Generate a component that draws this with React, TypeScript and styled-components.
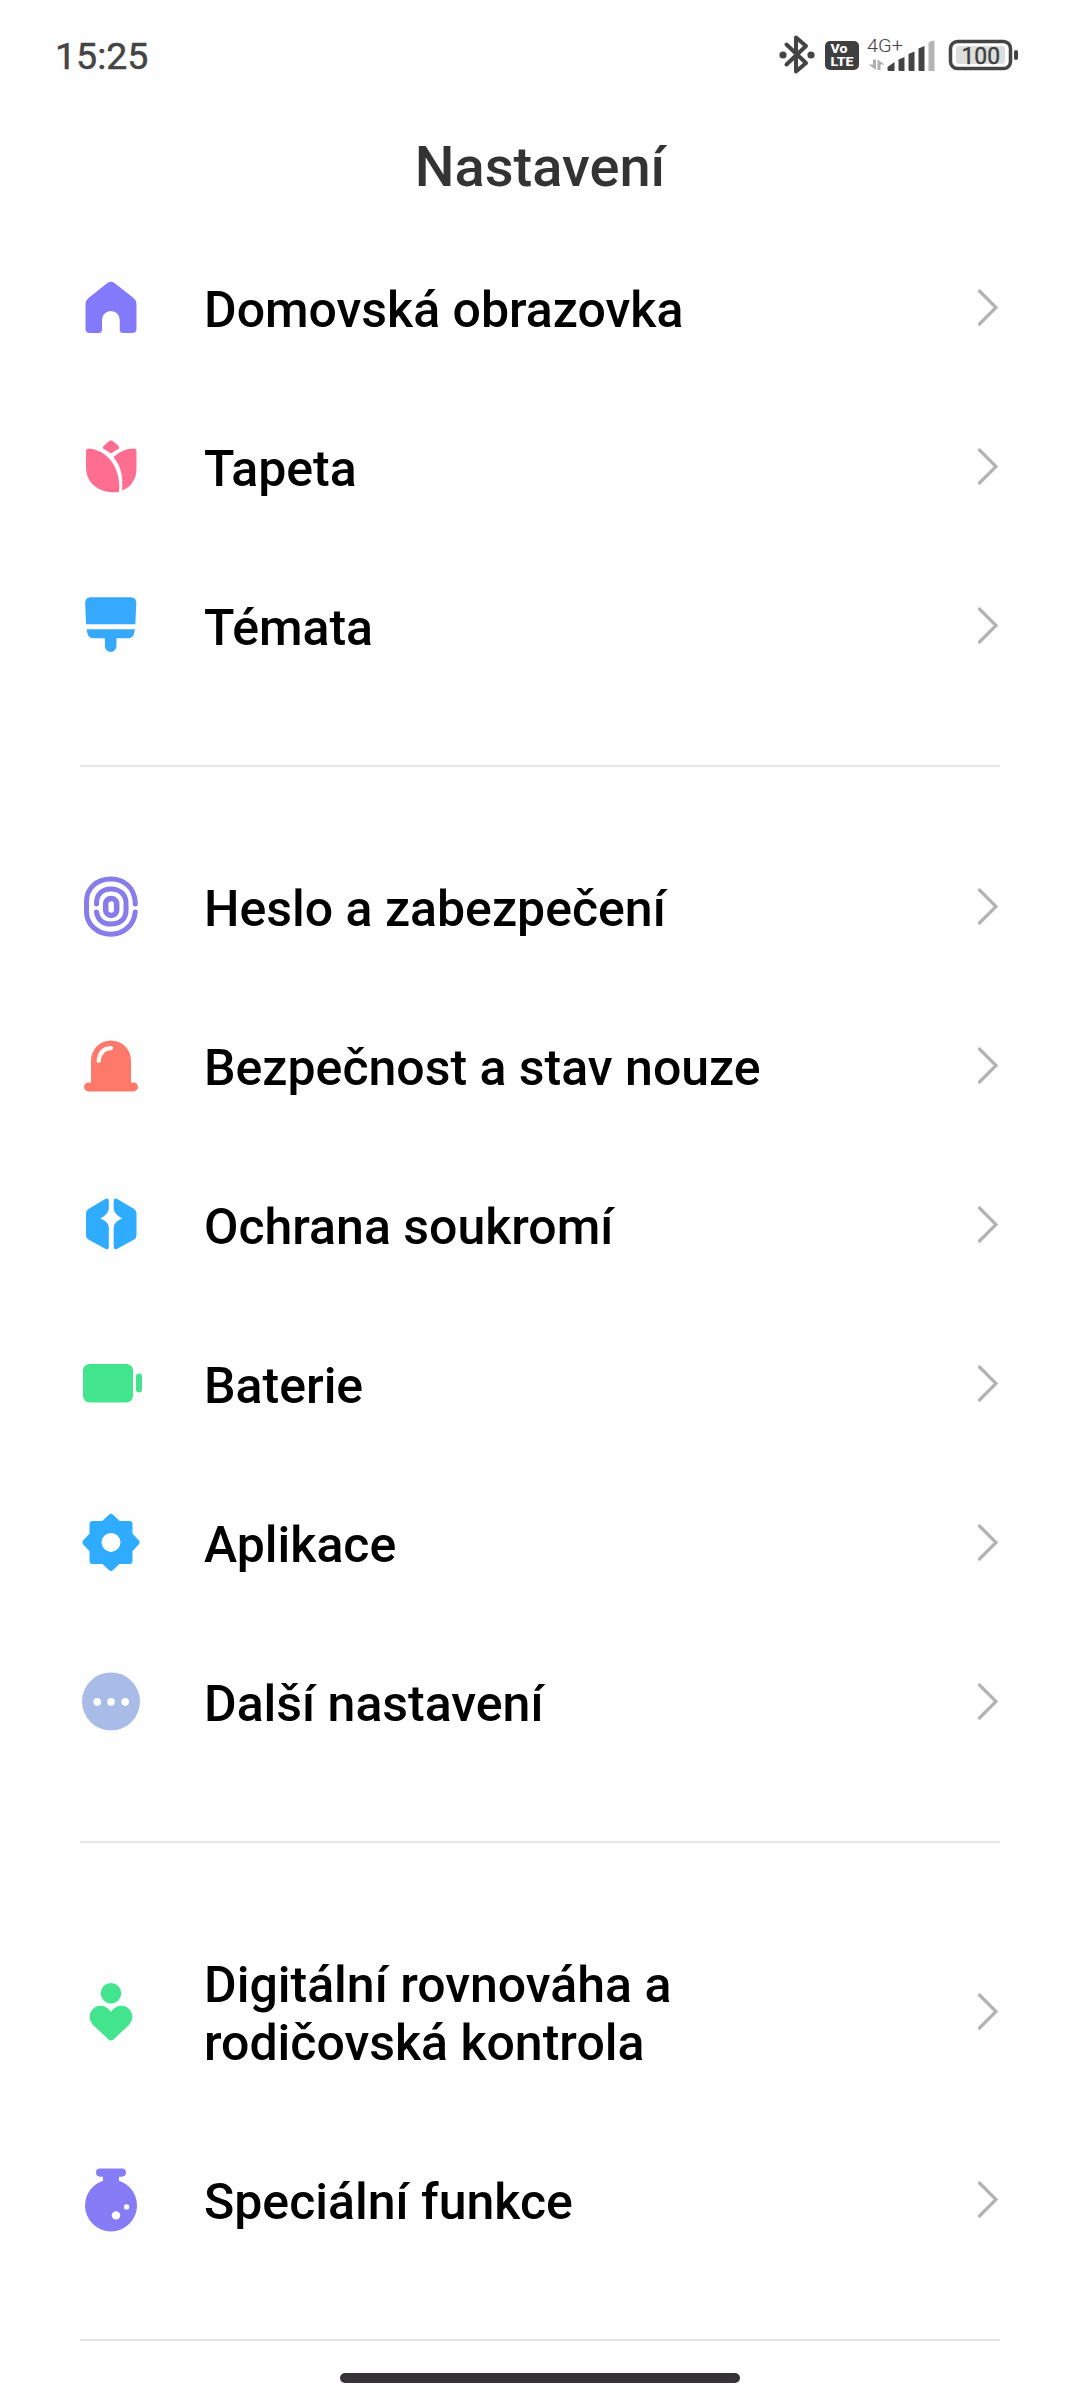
import React from "react";
import styled, { createGlobalStyle } from "styled-components";

const GlobalStyle = createGlobalStyle`
  * { box-sizing: border-box; }
  html, body { margin: 0; background: #fefefe; }
`;

const Screen = styled.div`
  width: 1080px;
  height: 2400px;
  overflow: hidden;
  display: flex;
  flex-direction: column;
  background: #fefefe;
  color: #000;
  font-family: Roboto, "Noto Sans", sans-serif;
`;

const StatusBar = styled.header`
  height: 112px;
  flex: none;
  display: flex;
  justify-content: space-between;
  padding: 0 60px 0 55px;
  color: #444;
`;

const Clock = styled.span`
  font-size: 37.5px;
  line-height: 44px;
  padding-top: 34px;
  -webkit-text-stroke: 0.5px #444;
`;

const StatusIcons = styled.svg`
  width: 280px;
  height: 70px;
  margin: 20px -20px 0 0;
  font-family: Roboto, sans-serif;
`;

const Title = styled.h1`
  height: 116px;
  flex: none;
  margin: 0;
  padding-top: 22px;
  text-align: center;
  font-size: 56px;
  line-height: 66px;
  font-weight: 500;
  color: #333;
`;

const List = styled.ul`
  list-style: none;
  margin: 0;
  padding: 0 80px;
`;

const Row = styled.li<{ $tall?: boolean }>`
  height: ${(p) => (p.$tall ? 217 : 159)}px;
  display: flex;
  align-items: center;
`;

const IconBox = styled.svg`
  width: 64px;
  height: 64px;
  flex: none;
  margin-right: 60px;
`;

const Label = styled.span`
  flex: 1;
  padding-top: 5px;
  font-size: 50px;
  line-height: 58px;
  font-weight: 500;
  white-space: pre-line;
`;

const Chevron = styled.svg`
  width: 24px;
  height: 40px;
  flex: none;
`;

const Divider = styled.hr`
  height: 2px;
  border: 0;
  margin: 60px 80px;
  background: #e6e6e6;
`;

const HomeIndicator = styled.div`
  width: 400px;
  height: 10px;
  flex: none;
  margin: -28px auto 0;
  border-radius: 5px;
  background: #353336;
`;

const icons = {
  home: (
    <path
      fill="#827afb"
      d="M28.500 7.600 Q32 5 35.500 7.600 L54.500 22.500 Q57.500 25 57.500 28.500 V53 Q57.500 57.500 53 57.500 H44 Q40.800 57.500 40.800 54 V44.500 A8.900 8.900 0 0 0 23 44.500 V54 Q23 57.500 19.500 57.500 H11 Q6.500 57.500 6.500 53 V28.500 Q6.500 25 9.500 22.500Z"
    />
  ),
  tulip: (
    <g fill="#ff6e90">
      <path d="M29.500 7.200 Q32 5 34.500 7.200 L39.500 11.500 Q41 13 39.500 14.500 Q35.500 16.300 32 19 Q28.500 16.300 24.500 14.500 Q23 13 24.500 11.500Z" />
      <path d="M7 17 Q7 14 10 14 C27 15.500 42.500 32 40 57.700 C22 59.500 7 50 7 33Z" />
      <path d="M34.500 22.500 Q43.500 14 54.500 14 Q57.500 14 57.500 17 V34 C57.500 45 52 52.500 43 56 C44.500 41 41.500 31 34.500 22.500Z" />
    </g>
  ),
  brush: (
    <g fill="#36a9fd" transform="translate(0 -2.200)">
      <path d="M11.500 6 H51.500 Q57.500 6 57.300 12 L56.300 33 H7 L6.200 12 Q6 6 11.500 6Z" />
      <path d="M7.500 38 H56 L54.800 43 Q53.600 47 49 47 H37.500 V55 A5.800 5.800 0 0 1 25.900 55 V47 H14.500 Q9.900 47 8.700 43Z" />
    </g>
  ),
  fingerprint: (
    <g fill="none" stroke="#877ce9" strokeLinecap="round">
      <path strokeWidth="5" d="M56.300 29.500 V27.500 C55 13 45 4.600 32 4.600 C17 4.600 7.500 14.500 7.500 27 V37 C7.500 50 18 59.800 32 59.800 C45 59.800 55 50.500 56.300 37.500" />
      <path strokeWidth="5" d="M17.500 29.500 C17.500 20 23 14.500 32 14.500 C41 14.500 47 20.500 47 28.500 V36 C47 44.500 41 49.700 32 49.700 C23.500 49.700 18.500 45 17.500 37.500" />
      <rect strokeWidth="5.500" x="26.700" y="24" width="11" height="17" rx="5.500" />
    </g>
  ),
  alarm: (
    <>
      <path fill="#fe796a" d="M12 49 V27 A20 20 0 0 1 52 27 V49 H54.500 A4.400 4.400 0 0 1 54.500 58 H9.500 A4.400 4.400 0 0 1 9.500 49Z" />
      <path fill="none" stroke="#fffaf3" strokeWidth="4.200" strokeLinecap="round" d="M19.600 27.500 C20.500 19.500 25 14.900 32 14.700" />
    </>
  ),
  privacy: (
    <g fill="#2fabff">
      <path d="M26.300 6.500 Q29.800 4.900 29.800 8.500 V16.500 Q28.800 22 21.500 26 Q28.800 29 29.800 34 V54.500 Q29.800 58 26.300 56.400 L9.300 47 Q7 45.500 7 42.500 V21 Q7 18 9.300 16.500Z" />
      <path d="M38.200 6.500 Q34.700 4.900 34.700 8.500 V16.500 Q35.700 22 43 26 Q35.700 29 34.700 34 V54.500 Q34.700 58 38.200 56.400 L55.200 47 Q57.500 45.500 57.500 42.500 V21 Q57.500 18 55.200 16.500Z" />
    </g>
  ),
  battery: (
    <g fill="#43e48e">
      <rect x="4" y="12.500" width="50" height="38.500" rx="6.500" />
      <rect x="57" y="22" width="6" height="19" rx="3" />
    </g>
  ),
  gear: (
    <>
      <path
        fill="#2fabff"
        stroke="#2fabff"
        strokeWidth="6"
        strokeLinejoin="round"
        d="M32 6.500 L39.500 13.500 H50.500 V24.500 L57.500 32 L50.500 39.500 V50.500 H39.500 L32 57.500 L24.500 50.500 H13.500 V39.500 L6.500 32 L13.500 24.500 V13.500 H24.500Z"
      />
      <circle cx="32" cy="32" r="9.500" fill="#fff" />
    </>
  ),
  more: (
    <>
      <circle cx="32" cy="32" r="29" fill="#a9bce8" />
      <g fill="#fff">
        <circle cx="18.200" cy="32.500" r="3.800" />
        <circle cx="32" cy="32.500" r="3.800" />
        <circle cx="46.200" cy="32.500" r="3.800" />
      </g>
    </>
  ),
  wellbeing: (
    <g fill="#43e48e">
      <circle cx="32" cy="13.800" r="10.300" />
      <path d="M32 32.500 C38 24 47 25.500 51 30.500 C54.500 35 54 41 50 45.500 L34.500 60 Q32 62 29.500 60 L14 45.500 C10 41 9.500 35 13 30.500 C17 25.500 26 24 32 32.500Z" />
    </g>
  ),
  flask: (
    <g transform="translate(0 1)">
      <g fill="#857cf6">
        <rect x="17" y="0" width="30" height="8.300" rx="4.100" />
        <rect x="24" y="4" width="16" height="12" />
        <circle cx="32" cy="37" r="26" />
      </g>
      <circle cx="37" cy="47" r="4.200" fill="#fff" />
      <circle cx="47.600" cy="38.500" r="2.700" fill="#fff" />
    </g>
  ),
};

type Item = { icon: keyof typeof icons; label: string; tall?: boolean };

const groups: Item[][] = [
  [
    { icon: "home", label: "Domovská obrazovka" },
    { icon: "tulip", label: "Tapeta" },
    { icon: "brush", label: "Témata" },
  ],
  [
    { icon: "fingerprint", label: "Heslo a zabezpečení" },
    { icon: "alarm", label: "Bezpečnost a stav nouze" },
    { icon: "privacy", label: "Ochrana soukromí" },
    { icon: "battery", label: "Baterie" },
    { icon: "gear", label: "Aplikace" },
    { icon: "more", label: "Další nastavení" },
  ],
  [
    { icon: "wellbeing", label: "Digitální rovnováha a\nrodičovská kontrola", tall: true },
    { icon: "flask", label: "Speciální funkce" },
  ],
];

function StatusGlyphs() {
  return (
    <StatusIcons viewBox="0 0 280 70">
      <path d="M26.500 24.500 L46 43 L36 51.500 V17.500 L46 26 L26.500 44.500" fill="none" stroke="#444" strokeWidth="4" strokeLinejoin="round" strokeLinecap="round" />
      <circle cx="23" cy="35" r="3.600" fill="#444" />
      <circle cx="51" cy="35" r="3.600" fill="#444" />
      <rect x="65" y="21" width="34" height="29" rx="5" fill="#3f3f3f" />
      <g fill="#fff" fontWeight="800" fontSize="12">
        <text x="70.500" y="33.300" textLength="17" lengthAdjust="spacingAndGlyphs">Vo</text>
        <text x="70.500" y="46.200" textLength="23" lengthAdjust="spacingAndGlyphs">LTE</text>
      </g>
      <text x="107" y="32" fontSize="19" fontWeight="300" textLength="36" lengthAdjust="spacingAndGlyphs" fill="#444">4G+</text>
      <path fill="#b0b0b0" d="M113 39.500 H116 V50 L108.500 44.500 H113Z M117.500 39.500 L124.500 44.500 H120.500 V50 H117.500Z" />
      <g fill="#444">
        <path d="M127.500 47 L134.500 42 V51 H129 Q127.500 51 127.500 49.500Z" />
        <path d="M138.500 39.500 L144.500 37 V51 H140 Q138.500 51 138.500 49.500Z" />
        <path d="M148.500 34 L154.500 31.500 V51 H150 Q148.500 51 148.500 49.500Z" />
        <path d="M158.500 28.500 L164.500 26 V51 H160 Q158.500 51 158.500 49.500Z" />
      </g>
      <path fill="#b5b5b5" d="M168.500 23.500 Q169 21 174.500 20.500 V51 H168.500Z" />
      <rect x="190.500" y="21.500" width="60" height="27" rx="7" fill="#fff" stroke="#444" strokeWidth="3.500" />
      <rect x="196" y="26" width="49" height="18" rx="3" fill="#dedede" />
      <text x="201.500" y="44" fontSize="23" textLength="38.500" lengthAdjust="spacingAndGlyphs" fontWeight="400" fill="#3f3f3f" stroke="#3f3f3f" strokeWidth="0.400">100</text>
      <rect x="254" y="30" width="4" height="10" rx="2" fill="#444" />
    </StatusIcons>
  );
}

export default function App() {
  return (
    <>
      <GlobalStyle />
      <Screen>
        <StatusBar>
          <Clock>15:25</Clock>
          <StatusGlyphs />
        </StatusBar>
        <Title>Nastavení</Title>
        {groups.map((group, i) => (
          <React.Fragment key={i}>
            <List>
              {group.map((item) => (
                <Row key={item.label} $tall={item.tall}>
                  <IconBox viewBox="1 0.600 64 64">{icons[item.icon]}</IconBox>
                  <Label>{item.label}</Label>
                  <Chevron viewBox="0 0.500 24 40">
                    <path d="M3.500 3.500 L20 20 L3.500 36.500" fill="none" stroke="#b3b3b3" strokeWidth="3.200" strokeLinecap="round" />
                  </Chevron>
                </Row>
              ))}
            </List>
            <Divider />
          </React.Fragment>
        ))}
        <HomeIndicator />
      </Screen>
    </>
  );
}
